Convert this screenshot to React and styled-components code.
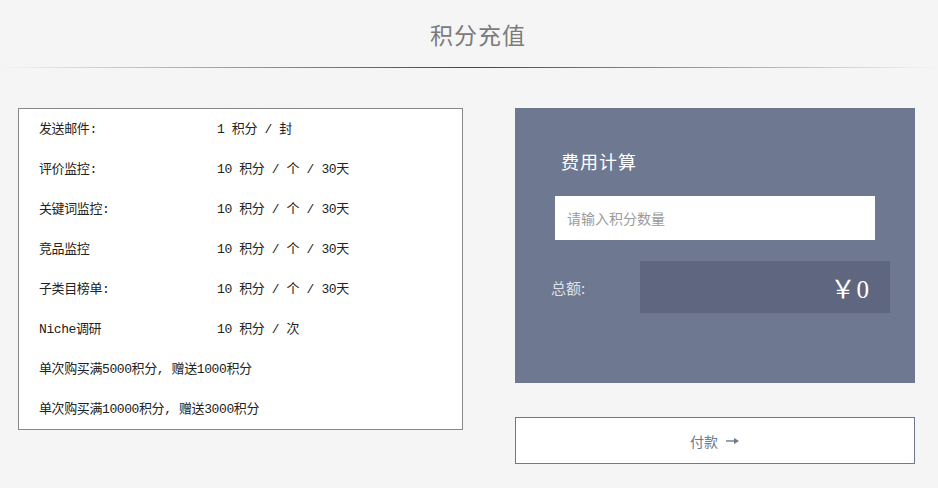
import React, { useState } from "react";
import styled, { createGlobalStyle } from "styled-components";

const GlobalStyle = createGlobalStyle`
  body {
    margin: 0;
    background: #f5f5f5;
    font-family: "Noto Sans CJK SC", "Liberation Sans", sans-serif;
  }
`;

const Page = styled.div`
  width: 938px;
  height: 488px;
  overflow: hidden;
`;

const Header = styled.header`
  height: 67px;
  display: flex;
  align-items: center;
  justify-content: center;
  padding-left: 18px;
  position: relative;
  &::after {
    content: "";
    position: absolute;
    left: 0;
    right: 0;
    bottom: -1px;
    height: 1px;
    background: linear-gradient(to right, rgba(68, 68, 68, 0), #444 50%, rgba(68, 68, 68, 0));
  }
`;

const Title = styled.h1`
  margin: 0;
  padding-top: 1px;
  font-size: 23px;
  font-weight: 400;
  color: #7b7b7b;
  letter-spacing: 1px;
`;

const Content = styled.div`
  display: flex;
  gap: 52px;
  padding: 41px 0 0 18px;
`;

const PriceList = styled.ul`
  list-style: none;
  margin: 0;
  padding: 0 0 0 20px;
  width: 423px;
  height: 320px;
  background: #fff;
  border: 1px solid #888;
  font-family: "Liberation Mono", "Noto Sans CJK SC", monospace;
  font-size: 13px;
  color: #222;
`;

const Row = styled.li`
  display: flex;
  height: 40px;
  box-sizing: border-box;
  padding-bottom: 3px;
  align-items: center;
  letter-spacing: ${(p) => (p.$tight ? "-0.4px" : "0")};
`;

const Label = styled.span`
  width: 178px;
`;

const Side = styled.div`
  display: flex;
  flex-direction: column;
  gap: 34px;
  width: 400px;
`;

const Calculator = styled.section`
  height: 275px;
  background: #6e7891;
  padding: 40px 0 0 36px;
  box-sizing: border-box;
`;

const CalcTitle = styled.h2`
  margin: 0 0 22px 10px;
  font-size: 18px;
  font-weight: 400;
  color: #fff;
  letter-spacing: 1px;
`;

const Input = styled.input`
  display: block;
  width: 320px;
  height: 44px;
  margin-left: 4px;
  border: none;
  outline: none;
  padding: 0 12px;
  box-sizing: border-box;
  font-family: inherit;
  font-size: 14px;
  color: #333;
  &::placeholder {
    color: #9a9a9a;
  }
`;

const TotalRow = styled.div`
  display: flex;
  align-items: center;
  margin-top: 21px;
`;

const TotalLabel = styled.span`
  width: 89px;
  font-size: 15px;
  color: #dde0e6;
`;

const TotalBox = styled.div`
  width: 250px;
  height: 52px;
  background: #5f6780;
  display: flex;
  align-items: center;
  justify-content: flex-end;
  padding-right: 20px;
  box-sizing: border-box;
  font-family: "Liberation Serif", "Noto Sans CJK SC", serif;
  font-size: 25px;
  color: #fff;
  letter-spacing: 1px;
`;

const PayButton = styled.button`
  height: 47px;
  background: #fff;
  border: 1px solid #6e7891;
  color: #6e7891;
  font-family: inherit;
  font-size: 14px;
  cursor: pointer;
  display: flex;
  align-items: center;
  justify-content: center;
  gap: 8px;
`;

const rules = [
  ["发送邮件:", "1 积分 / 封"],
  ["评价监控:", "10 积分 / 个 / 30天"],
  ["关键词监控:", "10 积分 / 个 / 30天"],
  ["竞品监控", "10 积分 / 个 / 30天"],
  ["子类目榜单:", "10 积分 / 个 / 30天"],
  ["Niche调研", "10 积分 / 次"],
];

const bonuses = [
  "单次购买满5000积分, 赠送1000积分",
  "单次购买满10000积分, 赠送3000积分",
];

const App = () => {
  const [points, setPoints] = useState("");
  const total = (Number(points) || 0) * 0;

  return (
    <Page>
      <GlobalStyle />
      <Header>
        <Title>积分充值</Title>
      </Header>
      <Content>
        <PriceList>
          {rules.map(([label, price]) => (
            <Row key={label} $tight>
              <Label>{label}</Label>
              <span>{price}</span>
            </Row>
          ))}
          {bonuses.map((text) => (
            <Row key={text} $tight>{text}</Row>
          ))}
        </PriceList>
        <Side>
          <Calculator>
            <CalcTitle>费用计算</CalcTitle>
            <Input
              placeholder="请输入积分数量"
              value={points}
              onChange={(e) => setPoints(e.target.value)}
            />
            <TotalRow>
              <TotalLabel>总额:</TotalLabel>
              <TotalBox>￥{total}</TotalBox>
            </TotalRow>
          </Calculator>
          <PayButton>
            付款
            <svg width="14" height="8" viewBox="0 0 14 8">
              <path d="M0 4h9" stroke="#6e7891" strokeWidth="1.4" />
              <path d="M8 1l5 3-5 3z" fill="#6e7891" />
            </svg>
          </PayButton>
        </Side>
      </Content>
    </Page>
  );
};

export default App;
